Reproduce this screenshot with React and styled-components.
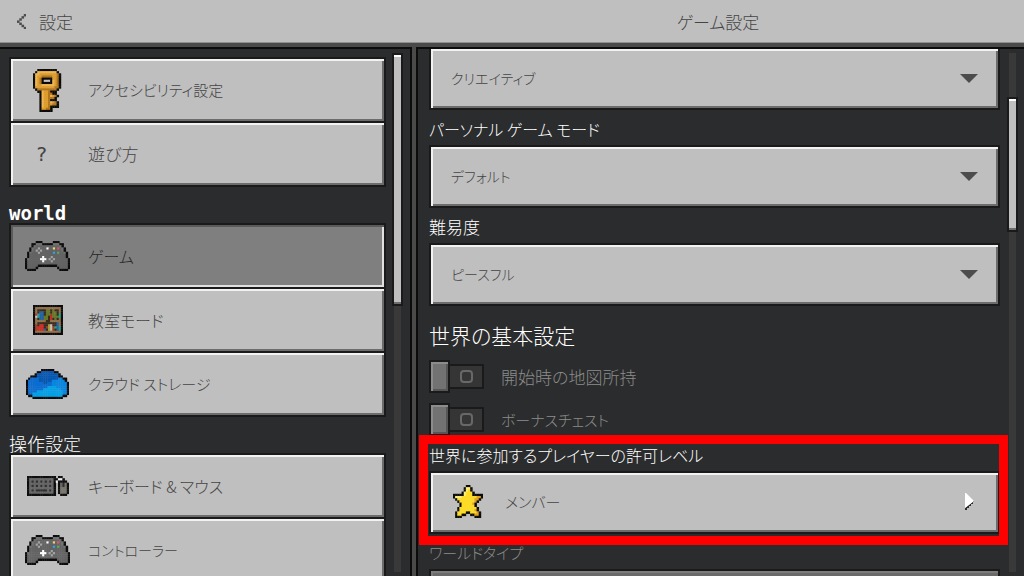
import React, { useState } from 'react';
import styled, { createGlobalStyle, css } from 'styled-components';

const GlobalStyle = createGlobalStyle`
* { box-sizing: border-box; }
body {
    margin: 0;
    background: #2b2c2d;
    overflow: hidden;
}
body, button, select {
    font-family: "Noto Sans CJK JP", sans-serif;
    font-feature-settings: "palt";
    font-size: 17px;
    font-weight: 300;
    line-height: 24px;
    color: #444444;
}
`;

// every icon is a grid of letters, one letter for one block
const KEY = {
    colors: { K: "#0d0b08", L: "#efb54a", G: "#dd9c2c", D: "#b0751c", W: "#c3c3c3" },
    rows: [
        "..KKKKKKKKK...",
        ".KLLLLLLLLLK..",
        "KLLGGGGGGGGDK.",
        "KLGGDDDDDGGDK.",
        "KLGDKKKKKGGDK.",
        "KLGDKWWWKLGDK.",
        "KLGDKKKKKLGDK.",
        "KLGGLLLLLLGDK.",
        "KGGGGGGGGGDDK.",
        ".KDDDDDDDDDK..",
        "..KKLGGDKKK...",
        "...KLGGDDKK...",
        "...KLGGDLGDK..",
        "...KLGGDDDK...",
        "...KLGGDKKK...",
        "...KLGGDLGDK..",
        "...KLGGDGDDK..",
        "...KLGGDKKKK..",
        "...KGGDDK.....",
        "...KKKKKK.....",
    ],
};

const CONTROLLER = {
    colors: { K: "#0c0c0c", g: "#636363", h: "#727272", a: "#a3a3a3", W: "#ffffff", Y: "#f0d860", R: "#ee4c6c", B: "#2ca4e0", N: "#5cab58" },
    rows: [
        ".....KKK.....KKK.....",
        "...KKhhhKKKKKhhhKK...",
        "...KhggggggggggghK...",
        "..KhggagggWggYgRghK..",
        "..KhgagaggggggggghK..",
        ".KhgggaggggggBgNgghK.",
        ".KgggggggggggggggggK.",
        ".KggggggWgggaggggggK.",
        "KhgggggWWWgagaggggggK",
        "KgggggggWgggagggggggK",
        "KgggggggggggggggggggK",
        "KgggggKKKKKKKKKgggggK",
        "KggggK.........KggggK",
        ".KKKK...........KKKK.",
    ],
};

const BOOKSHELF = {
    colors: { K: "#0c0c0c", o: "#92704a", k: "#3a2a1c", G: "#66782a", B: "#2462a4", R: "#cc2a22", r: "#9c3c24", c: "#22a48c", y: "#a89a34", w: "#c8c0b4" },
    rows: [
        "KKKKKKKKKKKKKK",
        "KooooooooooooK",
        "KokkkkGGkGkkoK",
        "KokBBkGGkGGkoK",
        "KRcBBkGGrGGkcK",
        "KwcBBGGkRGGGcK",
        "KokBBGGkRkGkoK",
        "KoooookkoooooK",
        "KokkkkkkkkkBoK",
        "KrkRRkkywkkBoK",
        "KrRRRkrywrcBcK",
        "KrRRRBkywrkBcK",
        "KooooooooooooK",
        "KKKKKKKKKKKKKK",
    ],
};

const CLOUD = {
    colors: { K: "#0a0a0c", a: "#0757b0", b: "#0a6cd0", c: "#0b86de", d: "#04a0e6" },
    rows: [
        ".......KKKKKK.......",
        ".....KKaaaaaaKK.....",
        "....KaaaaaaaaaaK....",
        "..KKKaaaaaaaaaaKK...",
        ".KbbbbaaaaaaaaaccKK.",
        "KbbbbbaaaaaaccccccK.",
        "KbbbbbbbaabbcccccccK",
        "KbbbbbbbbbbbcccccccK",
        "KbbbbbbbbbddddcccccK",
        "KbbbbbbbddddddddcccK",
        "KbbbbddddddddddddccK",
        "KbbddddddddddddddccK",
        ".KKddddddddddddddKK.",
        "...KKKKKKKKKKKKKK...",
    ],
};

const KEYBOARD = {
    colors: { K: "#0e0e0e", g: "#666666", k: "#303030", w: "#efefef", m: "#78746c" },
    rows: [
        "KKKKKKKKKKKKK.KK...",
        "KgggggggggggKKwwK..",
        "KgkgkgkgkgkgKwKKKK.",
        "KgggggggggggK.KgkmK",
        "KgkgkgkgkgkgK.KgkmK",
        "KgggggggggggK.KmmmK",
        "KgkgkkkkkgkgK.KmmmK",
        "KgggggggggggK.KmmmK",
        "KKKKKKKKKKKKK..KKK.",
    ],
};

const STAR = {
    colors: { K: "#0e0c06", L: "#fff07c", Y: "#ffdc24", O: "#e0a018" },
    rows: [
        "......KK......",
        ".....KLLK.....",
        ".....KLYK.....",
        "....KLYYYK....",
        "KKKKKLYYYKKKKK",
        "KLLLYYYYYYYOOK",
        ".KYYYYYYYYOOK.",
        "..KYYYYYYYOK..",
        "...KYYYYYOK...",
        "...KYYYYYYK...",
        "..KYYYYYYYYK..",
        "..KYYYYYYYOK..",
        ".KYYYYKKYYYOK.",
        ".KYYKK..KKOOK.",
        ".KKK......KKK.",
    ],
};

const CHEVRON = {
    colors: { K: "#4c4c4c" },
    rows: ["...K", "..K.", ".K..", "K...", ".K..", "..K.", "...K"],
};

// blocks overlap a little so that no seam shows between them
const PixelIcon = ({ art, width, height }) => (
    <svg
        width={width}
        height={height}
        viewBox={`0 0 ${art.rows[0].length} ${art.rows.length}`}
        preserveAspectRatio="none"
        aria-hidden="true"
    >
        {art.rows.map((row, y) => [...row].map((c, x) => (
            art.colors[c] && <rect key={`${x}-${y}`} x={x} y={y} width="1.15" height="1.15" fill={art.colors[c]} />
        )))}
    </svg>
);

const MENU = [
    {
        items: [
            { name: "アクセシビリティ設定", size: 15, icon: <PixelIcon art={KEY} width={30} height={43} /> },
            { name: "遊び方", size: 17 },
        ],
    },
    {
        title: "world",
        latin: true,
        items: [
            { name: "ゲーム", size: 16, icon: <PixelIcon art={CONTROLLER} width={45} height={30} /> },
            { name: "教室モード", size: 16, icon: <PixelIcon art={BOOKSHELF} width={30} height={30} /> },
            { name: "クラウド ストレージ", size: 15, icon: <PixelIcon art={CLOUD} width={43} height={30} /> },
        ],
    },
    {
        title: "操作設定",
        items: [
            { name: "キーボード & マウス", size: 16, icon: <PixelIcon art={KEYBOARD} width={42} height={20} /> },
            { name: "コントローラー", size: 14, icon: <PixelIcon art={CONTROLLER} width={45} height={30} /> },
        ],
    },
];

const Dropdown = ({ id, label, size, options, disabled }) => (
    <Field>
        {label && <FieldLabel htmlFor={id} $size={size} $disabled={disabled}>{label}</FieldLabel>}
        <SelectBox>
            <Select id={id} disabled={disabled} aria-label={label ? undefined : "ゲームモード"}>
                {options.map((option) => <option key={option}>{option}</option>)}
            </Select>
            <Caret viewBox="0 0 18 9" aria-hidden="true">
                <path d="M0 0h18L9 9z" fill="#4c4c4c" />
            </Caret>
        </SelectBox>
    </Field>
);

const Toggle = ({ label, size }) => (
    <ToggleRow $size={size}>
        <Switch>
            <SwitchInput type="checkbox" disabled />
            <Knob />
            <Track><Ring /></Track>
        </Switch>
        {label}
    </ToggleRow>
);

export default function App() {
    const [current, setCurrent] = useState("ゲーム");

    return (
        <>
            <GlobalStyle />
            <Page>
                <Header>
                    <BackButton type="button">
                        <PixelIcon art={CHEVRON} width={9} height={15} />
                        設定
                    </BackButton>
                    <Title>ゲーム設定</Title>
                </Header>
                <Body>
                    <Sidebar>
                        <Menu>
                            {MENU.map((group, i) => (
                                <React.Fragment key={i}>
                                    {group.title && <GroupTitle $latin={group.latin}>{group.title}</GroupTitle>}
                                    <Group>
                                        {group.items.map(({ name, size, icon }) => (
                                            <MenuButton
                                                key={name}
                                                type="button"
                                                $size={size}
                                                $active={current === name}
                                                onClick={() => setCurrent(name)}
                                            >
                                                <IconCell>{icon || <Question>?</Question>}</IconCell>
                                                {name}
                                            </MenuButton>
                                        ))}
                                    </Group>
                                </React.Fragment>
                            ))}
                        </Menu>
                        <Scrollbar>
                            <Thumb $height={253} />
                        </Scrollbar>
                    </Sidebar>
                    <Content>
                        <Form>
                            <Dropdown id="mode" options={["クリエイティブ"]} />
                            <Dropdown id="personal" label="パーソナル ゲーム モード" size={16} options={["デフォルト"]} />
                            <Dropdown id="difficulty" label="難易度" size={17} options={["ピースフル"]} />
                            <SectionTitle>世界の基本設定</SectionTitle>
                            <Toggles>
                                <Toggle label="開始時の地図所持" size={17} />
                                <Toggle label="ボーナスチェスト" size={15} />
                            </Toggles>
                            <Field>
                                <FieldLabel as="span" id="permission" $size={16}>世界に参加するプレイヤーの許可レベル</FieldLabel>
                                <LinkButton type="button" aria-describedby="permission">
                                    <PixelIcon art={STAR} width={30} height={33} />
                                    メンバー
                                    <Forward viewBox="0 0 9 17" aria-hidden="true">
                                        <path d="M0 15v2h2v-2h2v-2h2v-2h2V9h1V8z" fill="#2a2a2a" />
                                        <path d="M0 0h1l8 8-9 7z" fill="#ffffff" />
                                    </Forward>
                                </LinkButton>
                                <Highlight />
                            </Field>
                            <Dropdown id="type" label="ワールドタイプ" size={15} options={[""]} disabled />
                        </Form>
                        <Scrollbar>
                            <Thumb $height={135} $scrolled={44} />
                        </Scrollbar>
                    </Content>
                </Body>
            </Page>
        </>
    )
}


const raised = css`
border: 2px solid #1a1a1a;
border-radius: 0;
background: #bfbfbf;
box-shadow: inset 2px 2px 0 #f2f2f2, inset -2px -2px 0 #6c6c6c;
`;

const Page = styled.div`
display: flex; flex-direction: column;
height: 100vh;
overflow: hidden;
`;

const Header = styled.header`
display: grid; grid-template-columns: 412px 1fr;
align-items: center;
height: 47px;
flex: none;
background: #bfbfbf;
border-bottom: 4px solid #4a4a4a;
box-shadow: inset 0 -1px 0 #8f9090;
`;

const BackButton = styled.button`
display: flex; align-items: center;
justify-self: start;
gap: 13px;
padding: 8px 17px;
border: none;
background: none;
`;

const Title = styled.h1`
margin: 0;
font-size: 17px;
font-weight: inherit;
text-align: center;
`;

const Body = styled.div`
display: grid; grid-template-columns: 412px minmax(0, 1fr);
grid-template-rows: minmax(0, 1fr);
gap: 4px;
flex: 1;
min-height: 0;
background: #4a4a4a;
`;

const Sidebar = styled.nav`
display: flex;
gap: 6px;
padding-right: 7px;
border: 0 solid #0c0c0c;
border-width: 2px 2px 0 0;
background: #2b2c2d;
overflow: hidden;
`;

const Menu = styled.div`
flex: 1;
padding: 8px 0 0 9px;
`;

const Group = styled.div`
display: flex; flex-direction: column;
`;

const GroupTitle = styled.h2`
height: 36px;
margin: 0;
padding-top: 14px;
color: #ffffff;
font-size: 18px;
font-weight: inherit;
line-height: 24px;
${props => props.$latin && css`
    font-family: "DejaVu Sans Mono", monospace;
    font-size: 19px;
    font-weight: bold;
`}
`;

const MenuButton = styled.button`
${raised}
display: flex; align-items: center;
flex: none;
gap: 18px;
height: 66px;
padding: 0 14px;
font-size: ${props => props.$size}px;
text-align: left;
cursor: pointer;
& + & { margin-top: -2px; }
${props => props.$active && css`
    background: #7f7f7f;
    box-shadow: inset 2px 2px 0 #5a5a5a, inset 0 -2px 0 #e0e0e0, inset -2px 0 0 #e0e0e0;
    color: #262626;
`}
`;

const IconCell = styled.span`
display: flex; align-items: center; justify-content: center;
width: 45px;
`;

const Question = styled.span`
width: 24px;
margin-right: 12px;
font-family: "DejaVu Sans Mono", monospace;
font-size: 20px;
text-align: center;
`;

const Scrollbar = styled.div`
display: flex; justify-content: center;
flex: none;
width: 11px;
margin: 4px 0;
background: linear-gradient(#393939, #393939) center / 7px 100% no-repeat;
`;

const Thumb = styled.div`
${raised}
width: 11px;
height: ${props => props.$height}px;
margin-top: ${props => props.$scrolled || 0}px;
box-shadow: inset 0 2px 0 #ffffff, inset 0 -2px 0 #6c6c6c;
`;

const Content = styled.main`
display: flex;
gap: 7px;
padding: 0 6px 0 11px;
border: 0 solid #0c0c0c;
border-width: 2px 0 0 2px;
background: #2b2c2d;
overflow: hidden;
`;

const Form = styled.form`
flex: 1;
margin-top: -2px;
`;

const Field = styled.div`
position: relative;
`;

const FieldLabel = styled.label`
display: block;
height: 35px;
padding-top: 7px;
color: ${props => props.$disabled ? "#8c8c8c" : "#ffffff"};
font-size: ${props => props.$size}px;
line-height: 24px;
white-space: nowrap;
`;

const SelectBox = styled.div`
position: relative;
`;

const Select = styled.select`
${raised}
appearance: none;
display: block;
width: 100%;
height: 63px;
padding: 0 48px 2px 20px;
font-size: 14px;
opacity: 1;
&:disabled {
    background: #6a6a6a;
    box-shadow: inset 2px 2px 0 #7c7c7c;
}
`;

const Caret = styled.svg`
position: absolute;
right: 22px;
top: 27px;
width: 18px;
height: 9px;
pointer-events: none;
`;

const SectionTitle = styled.h2`
margin: 0;
padding: 14px 0 10px;
color: #ffffff;
font-size: 21px;
font-weight: inherit;
line-height: 30px;
`;

const Toggles = styled.div`
display: flex; flex-direction: column;
gap: 10px;
`;

const ToggleRow = styled.label`
display: flex; align-items: center;
gap: 17px;
height: 33px;
color: #8c8c8c;
font-size: ${props => props.$size}px;
`;

const Switch = styled.span`
display: flex; align-items: center;
position: relative;
`;

const SwitchInput = styled.input`
position: absolute;
inset: 0;
width: 100%;
height: 100%;
margin: 0;
opacity: 0;
`;

const Knob = styled.span`
width: 21px;
height: 33px;
border: 2px solid #1a1a1a;
background: #727272;
box-shadow: inset 2px 2px 0 #8c8c8c, inset -2px -2px 0 #565656;
`;

const Track = styled.span`
display: flex; align-items: center; justify-content: center;
width: 36px;
height: 25px;
margin-left: -2px;
border: 2px solid #1a1a1a;
background: #353535;
`;

const Ring = styled.span`
width: 13px;
height: 13px;
border: 2px solid #686868;
border-radius: 4px;
`;

const LinkButton = styled.button`
${raised}
display: flex; align-items: center;
gap: 22px;
width: 100%;
height: 63px;
padding: 0 24px 2px 22px;
font-size: 15px;
text-align: left;
cursor: pointer;
`;

const Forward = styled.svg`
width: 9px;
height: 17px;
margin-left: auto;
`;

const Highlight = styled.div`
position: absolute;
inset: -1px -8px -11px -10px;
border: 9px solid #ff0000;
pointer-events: none;
`;
